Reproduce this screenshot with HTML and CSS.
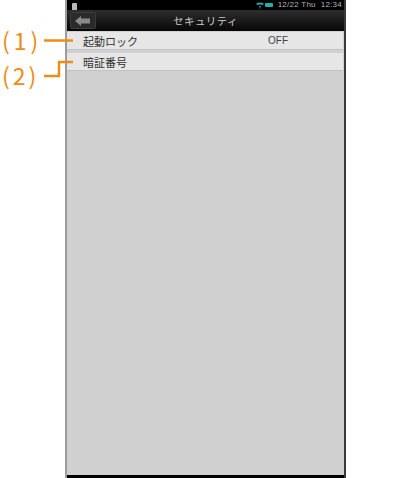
FILE: index.html
```html
<!DOCTYPE html>
<html lang="ja">
<head>
    <meta charset="UTF-8">
    <title>セキュリティ</title>
    <link rel="stylesheet" href="styles.css">
</head>
<body>
    <div class="phone">
        <div class="status-bar">
            <span class="sd-icon"></span>
            <div class="status-right">
                <svg class="wifi" width="8" height="7" viewBox="0 0 9 7">
                    <path d="M0 1.500 Q4.500 -1 9 1.500 L7.500 3 Q4.500 1.500 1.500 3Z M3 4 L6 4 L5 5 L5 7 L4 7 L4 5Z" fill="#1fa8a0"/>
                </svg>
                <span class="battery"></span>
                <span class="clock">12/22 Thu&nbsp; 12:34</span>
            </div>
        </div>
        <div class="title-bar">
            <div class="back-btn">
                <svg width="16" height="10" viewBox="0 0 16 10">
                    <path d="M0 5 L6 0 L6 2.500 L15 2.500 L15 7.500 L6 7.500 L6 10Z" fill="#8a8a8a"/>
                </svg>
            </div>
            <h1>セキュリティ</h1>
        </div>
        <div class="list">
            <div class="row">
                <span class="row-label">起動ロック</span>
                <span class="row-value">OFF</span>
            </div>
            <div class="row">
                <span class="row-label">暗証番号</span>
            </div>
        </div>
        <div class="bottom-bar"></div>
    </div>

    <!-- callouts over the screenshot -->
    <span class="callout-num num-1">(1)</span>
    <span class="callout-num num-2">(2)</span>
    <svg class="callout-lines" width="80" height="90" viewBox="0 0 80 90">
        <path d="M44 40.500 H73" fill="none" stroke="#ee8c14" stroke-width="2.500"/>
        <path d="M44 76 H59 V62 H73" fill="none" stroke="#ee8c14" stroke-width="2.500"/>
    </svg>
</body>
</html>
```

FILE: styles.css
```css
* {
    margin: 0;
    padding: 0;
    box-sizing: border-box;
}

html, body {
    width: 400px;
    height: 478px;
    overflow: hidden;
    background: #fff;
    font-family: "Noto Sans CJK JP", "Liberation Sans", sans-serif;
}

body {
    padding-left: 65px;
}

.phone {
    width: 281px;
    height: 478px;
    display: flex;
    flex-direction: column;
    background: #d0d0d0;
    border-left: 2px solid #9c9c9c;
    border-right: 2px solid #3a3a3a;
}

.status-bar {
    height: 10px;
    display: flex;
    align-items: center;
    justify-content: space-between;
    padding: 0 2px 0 5px;
    background: #000;
}

.sd-icon {
    width: 5px;
    height: 7px;
    margin-top: 3px;
    border-radius: 1px 1px 0 0;
    background: #b8b8b8;
}

.status-right {
    display: flex;
    align-items: center;
    gap: 1px;
}

.battery {
    width: 8px;
    height: 4px;
    margin-right: 4px;
    border-radius: 1px;
    background: #22b0a8;
}

.clock {
    font-family: "Liberation Sans", sans-serif;
    font-size: 8px;
    line-height: 10px;
    color: #b4b4b4;
    letter-spacing: 0.25px;
}

.title-bar {
    position: relative;
    height: 21px;
    display: flex;
    align-items: center;
    justify-content: center;
    background: linear-gradient(#2e2e2e, #060606);
}

.back-btn {
    position: absolute;
    left: 3px;
    top: 2px;
    width: 26px;
    height: 17px;
    display: flex;
    align-items: center;
    justify-content: center;
    background: #2a2a2a;
    border: 1px solid #3c3c3c;
    border-radius: 2px;
}

.title-bar h1 {
    font-size: 10.500px;
    font-weight: normal;
    letter-spacing: 0.4px;
    color: #c8c8c8;
}

.list {
    flex: 1;
    display: flex;
    flex-direction: column;
    gap: 3px;
    padding: 1px 1px 0 0;
}

.row {
    height: 18px;
    display: flex;
    align-items: center;
    border-bottom: 1px solid #c2c2c2;
    background: #e6e6e6;
    font-size: 11px;
    color: #333;
}

.row-label {
    width: 201px;
    padding-left: 16px;
}

.row-value {
    font-family: "Liberation Sans", sans-serif;
    font-size: 10px;
    color: #444;
}

.bottom-bar {
    height: 3px;
    background: #000;
}

.callout-num {
    position: absolute;
    left: 2px;
    font-family: "Noto Sans CJK JP", sans-serif;
    font-size: 23px;
    line-height: 24px;
    letter-spacing: 3px;
    color: #ee8c14;
}

.num-1 {
    top: 28px;
    letter-spacing: 4px;
}

.num-2 {
    top: 63px;
}

.callout-lines {
    position: absolute;
    left: 0;
    top: 0;
}
```
